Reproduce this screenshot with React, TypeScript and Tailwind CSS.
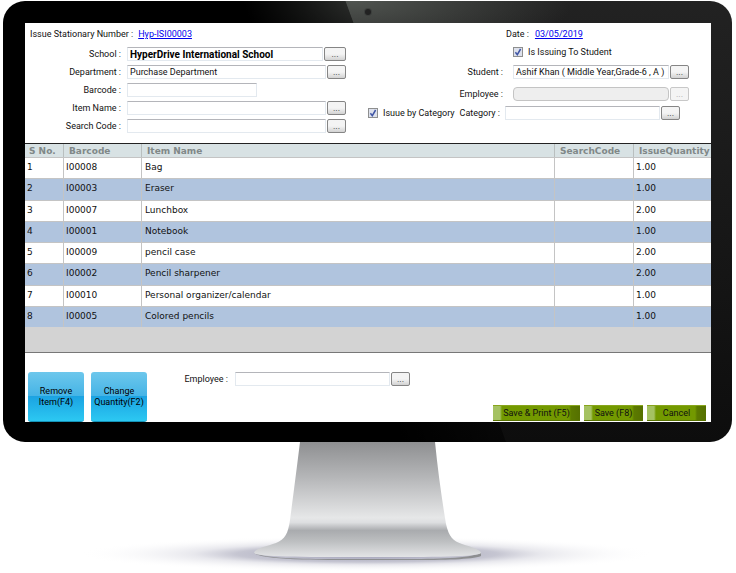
import { ReactNode } from "react";

const items = [
    { barcode: "I00008", name: "Bag", quantity: "1.00" },
    { barcode: "I00003", name: "Eraser", quantity: "1.00" },
    { barcode: "I00007", name: "Lunchbox", quantity: "2.00" },
    { barcode: "I00001", name: "Notebook", quantity: "1.00" },
    { barcode: "I00009", name: "pencil case", quantity: "2.00" },
    { barcode: "I00002", name: "Pencil sharpener", quantity: "2.00" },
    { barcode: "I00010", name: "Personal organizer/calendar", quantity: "1.00" },
    { barcode: "I00005", name: "Colored pencils", quantity: "1.00" },
];

const inputClass =
    "h-[14px] min-w-0 border border-[#e3e9ef] border-t-[#b4b5ba] bg-white px-[2px] outline-none disabled:rounded-sm disabled:border-[#c4c4c4] disabled:bg-[#eeeeee]";

const BrowseButton = ({ label, wide, disabled }: { label: string; wide?: boolean; disabled?: boolean }) => (
    <button
        type="button"
        aria-label={label}
        disabled={disabled}
        className={`${wide ? "w-[22px]" : "w-[19px]"} ml-px h-[14px] shrink-0 rounded-[2px] border border-[#858585] bg-linear-to-b from-[#f4f4f4] from-50% to-[#d2d2d2] leading-[12px] text-[#333] disabled:border-[#c8c8c8] disabled:to-[#f4f4f4] disabled:text-[#aaa]`}
    >
        ...
    </button>
);

const Field = ({
    id,
    label,
    labelClass,
    inputWidth,
    value,
    bold,
    disabled,
    browse = true,
}: {
    id: string;
    label: string;
    labelClass: string;
    inputWidth: string;
    value?: string;
    bold?: boolean;
    disabled?: boolean;
    browse?: boolean;
}) => (
    <div className="flex h-[14px] items-center">
        <label htmlFor={id} className={`${labelClass} shrink-0 text-right`}>
            {label} :
        </label>
        <input
            id={id}
            type="text"
            defaultValue={value}
            disabled={disabled}
            className={`${inputClass} ${inputWidth} ${bold ? "text-[10px] font-bold text-black" : ""}`}
        />
        {browse && <BrowseButton label={`Browse ${label}`} wide={bold} disabled={disabled} />}
    </div>
);

const CheckBox = ({ id, label }: { id: string; label: string }) => (
    <div className="flex items-center gap-[5px]">
        <span className="grid h-[10px] w-[10px]">
            <input
                id={id}
                type="checkbox"
                defaultChecked
                className="peer col-start-1 row-start-1 h-[10px] w-[10px] appearance-none border border-[#8e8f8f] bg-[#dde1ec]"
            />
            <svg
                viewBox="0 0 10 10"
                className="pointer-events-none invisible col-start-1 row-start-1 h-[10px] w-[10px] peer-checked:visible"
            >
                <path d="M2.4 5.2 4.3 7.6 7.6 2" fill="none" stroke="#3f55a5" strokeWidth="1.5" />
            </svg>
        </span>
        <label htmlFor={id}>{label}</label>
    </div>
);

const IssueForm = () => (
    <form className="flex justify-between pr-[22px] pb-[10px]">
        <div className="flex flex-col gap-1 pt-1">
            <div className="mb-[2px] flex h-[14px] items-center gap-[5px] pl-[5px]">
                <span>Issue Stationary Number :</span>
                <a href="#number" className="text-[#0000ee] underline">
                    Hyp-ISI00003
                </a>
            </div>
            <Field
                id="school"
                label="School"
                labelClass="w-[102px] pr-[6px]"
                inputWidth="w-[196px]"
                value="HyperDrive International School"
                bold
            />
            <Field
                id="department"
                label="Department"
                labelClass="w-[102px] pr-[6px]"
                inputWidth="w-[199px]"
                value="Purchase Department"
            />
            <Field
                id="barcode"
                label="Barcode"
                labelClass="w-[102px] pr-[6px]"
                inputWidth="w-[130px]"
                browse={false}
            />
            <Field id="item" label="Item Name" labelClass="w-[102px] pr-[6px]" inputWidth="w-[199px]" />
            <Field id="search" label="Search Code" labelClass="w-[102px] pr-[6px]" inputWidth="w-[199px]" />
        </div>
        <div className="flex flex-col pt-1">
            <div className="flex h-[14px] items-center gap-[6px] pl-[138px]">
                <span>Date :</span>
                <a href="#date" className="text-[#0000ee] underline">
                    03/05/2019
                </a>
            </div>
            <div className="mt-1 flex h-[14px] items-center pl-[145px]">
                <CheckBox id="to-student" label="Is Issuing To Student" />
            </div>
            <div className="mt-[6px]">
                <Field
                    id="student"
                    label="Student"
                    labelClass="w-[145px] pr-[10px]"
                    inputWidth="w-[156px]"
                    value="Ashif Khan ( Middle Year,Grade-6 , A )"
                />
            </div>
            <div className="mt-2">
                <Field
                    id="employee-to"
                    label="Employee"
                    labelClass="w-[145px] pr-[10px]"
                    inputWidth="w-[156px]"
                    disabled
                />
            </div>
            <div className="mt-[5px] flex items-center justify-between pr-[9px]">
                <CheckBox id="by-category" label="Isuue by Category" />
                <Field id="category" label="Category" labelClass="pr-[5px]" inputWidth="w-[155px]" />
            </div>
        </div>
    </form>
);

const HeadCell = ({ children }: { children: ReactNode }) => (
    <th className="border-l border-[#b9bfbf] pl-[5px] text-left first:border-l-0 first:pl-[4px]">{children}</th>
);

const ItemTable = () => (
    <div className="overflow-hidden border-t border-b border-t-[#222] border-b-[#777] bg-[#d3d3d3] pb-[25px] font-['DejaVu_Sans',sans-serif] text-[9px] leading-3">
        <table className="h-[183px] w-full table-fixed border-separate border-spacing-0 whitespace-nowrap text-[#111]">
            <colgroup>
                <col className="w-[38px]" />
                <col className="w-[78px]" />
                <col />
                <col className="w-[79px]" />
                <col className="w-[78px]" />
            </colgroup>
            <thead>
                <tr className="h-[13px] bg-[#d8e2e4] text-[#808888]">
                    <HeadCell>S No.</HeadCell>
                    <HeadCell>Barcode</HeadCell>
                    <HeadCell>Item Name</HeadCell>
                    <HeadCell>SearchCode</HeadCell>
                    <HeadCell>IssueQuantity</HeadCell>
                </tr>
            </thead>
            <tbody className="[&_td]:border-t [&_td]:border-[#c4c4c4] [&_td]:pb-[2px]">
                {items.map((item, i) => (
                    <tr key={item.barcode} className="bg-white even:bg-[#b0c4de]">
                        <td className="pl-[2px]">{i + 1}</td>
                        <td className="border-l pl-[2px]">{item.barcode}</td>
                        <td className="border-l pl-[3px]">{item.name}</td>
                        <td className="border-l"></td>
                        <td className="border-l pl-[2px]">{item.quantity}</td>
                    </tr>
                ))}
            </tbody>
        </table>
    </div>
);

const BlueButton = ({ children }: { children: ReactNode }) => (
    <button
        type="button"
        className="h-[50px] w-[56px] rounded-[3px] border-b border-[#1593b8] bg-[linear-gradient(#6dc7ec_0%,#45b4e6_49%,#1ba3e2_50%,#2cc8f2_100%)] leading-[11px] text-black"
    >
        {children}
    </button>
);

const GreenButton = ({ children, width }: { children: ReactNode; width: string }) => (
    <button
        type="button"
        className={`${width} h-4 border-y border-t-[#88a51c] border-b-[#587200] bg-[linear-gradient(90deg,#a5c262_0,#a5c262_7px,transparent_9px),linear-gradient(270deg,#557000_0,#5c7a00_9px,#739900_11px)] leading-3 text-[#111]`}
    >
        {children}
    </button>
);

const BottomBar = () => (
    <div className="flex items-end justify-between pt-[19px] pr-[5px] pl-[3px]">
        <div className="flex items-start">
            <div className="flex gap-[7px]">
                <BlueButton>
                    Remove
                    <br />
                    Item(F4)
                </BlueButton>
                <BlueButton>
                    Change
                    <br />
                    Quantity(F2)
                </BlueButton>
            </div>
            <Field id="employee" label="Employee" labelClass="w-[88px] pr-[7px]" inputWidth="w-[155px]" />
        </div>
        <div className="flex gap-1 pb-px">
            <GreenButton width="w-[87px]">Save &amp; Print (F5)</GreenButton>
            <GreenButton width="w-[59px]">Save (F8)</GreenButton>
            <GreenButton width="w-[59px]">Cancel</GreenButton>
        </div>
    </div>
);

const Stand = () => (
    <svg viewBox="0 0 736 131" className="mx-auto block w-full max-w-[736px]" aria-hidden="true">
        <defs>
            <linearGradient id="metal" x1="0" y1="0" x2="0" y2="1">
                <stop offset="0" stopColor="#8e8f91" />
                <stop offset="0.3" stopColor="#b4b5b7" />
                <stop offset="0.66" stopColor="#e6e7e8" />
                <stop offset="0.7" stopColor="#dddee0" />
                <stop offset="0.77" stopColor="#a9abae" />
                <stop offset="0.86" stopColor="#bcbec0" />
                <stop offset="1" stopColor="#e3e4e6" />
            </linearGradient>
            <radialGradient id="shade">
                <stop offset="0" stopColor="#77779a" stopOpacity="0.75" />
                <stop offset="0.45" stopColor="#8c8ca4" stopOpacity="0.5" />
                <stop offset="0.6" stopColor="#a4a4b8" stopOpacity="0.25" />
                <stop offset="1" stopColor="#ffffff" stopOpacity="0" />
            </radialGradient>
        </defs>
        <ellipse cx="367" cy="112" rx="290" ry="18" fill="url(#shade)" />
        <path
            d="M254 111C270 118 320 117 367 117C420 117 465 118 481 111L481 114C468 119 420 118 367 118C315 118 262 118 254 111Z"
            fill="#8d8e90"
        />
        <path
            d="M300 0H435C438 30 442 58 446 82C449 95 453 99 462 102C472 105 481 108 481 111C478 115 435 115 367 115C300 115 257 115 254 111C255 106 268 104 276 101C285 97 288 92 290 78C294 48 297 24 300 0Z"
            fill="url(#metal)"
        />
    </svg>
);

const App = () => (
    <main className="bg-white pt-px font-[Roboto,'Liberation_Sans',sans-serif] text-[9px] leading-3 text-[#111]">
        <div className="mr-1 ml-[3px] rounded-[22px] bg-[linear-gradient(70deg,#000_0%,#000_45%,rgba(0,0,0,0.5)_56.5%,transparent_56.6%),radial-gradient(ellipse_220px_60px_at_48%_0%,#505450_0,transparent),linear-gradient(#222,#0d0d0d)] pr-[21px] pb-[20px] pl-[22px]">
            <div className="flex h-[22px] items-center justify-center">
                <span className="h-[6px] w-[6px] rounded-full bg-[#222] ring-1 ring-[#3c3f3d]"></span>
            </div>
            <div className="overflow-hidden bg-white">
                <IssueForm />
                <ItemTable />
                <BottomBar />
            </div>
        </div>
        <Stand />
    </main>
);

export default App;
